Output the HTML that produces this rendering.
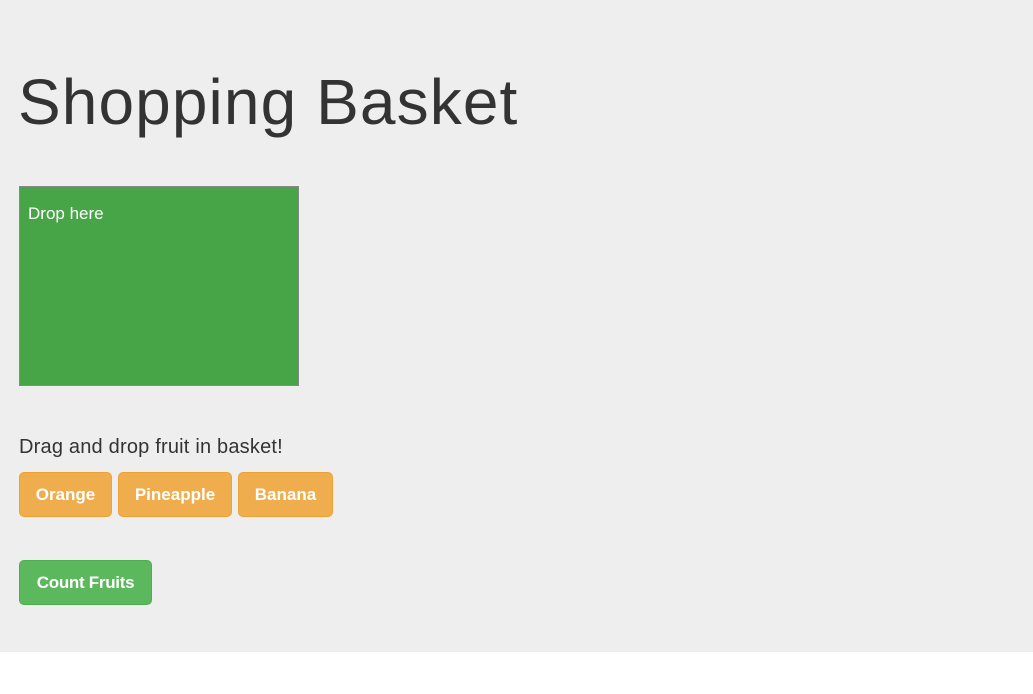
<!DOCTYPE html>
<html><head><style>
html,body{margin:0;padding:0;background:#fff;width:1033px;height:694px;overflow:hidden;font-family:"Liberation Sans",Arial,sans-serif;}
.jt{position:absolute;left:0;top:0;width:1033px;height:652px;background:#eee;}
h1{position:absolute;left:18px;top:64px;margin:0;font-size:64px;font-weight:500;color:#333;line-height:76px;letter-spacing:1.1px;white-space:nowrap;}
.drop{position:absolute;left:19px;top:186px;width:278px;height:198px;background:#47a447;border:1px solid #888;}
.drop span{position:absolute;left:8px;top:17px;color:#fff;font-size:17px;}
.p{position:absolute;left:19px;top:436px;font-size:20px;color:#333;letter-spacing:0.2px;}
.b{position:absolute;border-radius:5px;color:#fff;font-size:17px;font-weight:bold;line-height:43px;text-align:center;box-sizing:border-box;height:45px;}
.o{background:#f0ad4e;border:1px solid #eea236;top:472px;}
.g{background:#5cb85c;border:1px solid #4cae4c;top:560px;}
</style></head><body>
<div class="jt">
<h1>Shopping Basket</h1>
<div class="drop"><span>Drop here</span></div>
<div class="p">Drag and drop fruit in basket!</div>
<div class="b o" style="left:19px;width:93px">Orange</div>
<div class="b o" style="left:118px;width:114px">Pineapple</div>
<div class="b o" style="left:238px;width:95px">Banana</div>
<div class="b g" style="left:19px;width:133px;letter-spacing:-0.3px">Count Fruits</div>
</div>
</body></html>
